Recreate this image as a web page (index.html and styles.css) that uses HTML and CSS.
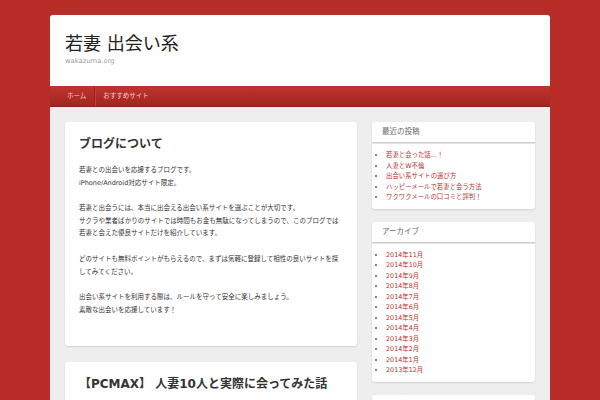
FILE: index.html
```html
<!DOCTYPE html>
<html lang="ja">
<head>
<meta charset="utf-8">
<title>若妻 出会い系</title>
<link rel="stylesheet" href="styles.css">
</head>
<body>
<div class="site">
  <header class="header">
    <h1 class="site-title">若妻 出会い系</h1>
    <div class="site-desc">wakazuma.org</div>
  </header>
  <nav class="nav">
    <a href="#">ホーム</a>
    <a href="#">おすすめサイト</a>
  </nav>
  <div class="content">
    <main class="main">
      <article class="card">
        <h2>ブログについて</h2>
        <p>若妻との出会いを応援するブログです。<br>iPhone/Android対応サイト限定。</p>
        <p>若妻と出会うには、本当に出会える出会い系サイトを選ぶことが大切です。<br>サクラや業者ばかりのサイトでは時間もお金も無駄になってしまうので、このブログでは若妻と会えた優良サイトだけを紹介しています。</p>
        <p>どのサイトも無料ポイントがもらえるので、まずは気軽に登録して相性の良いサイトを探してみてください。</p>
        <p>出会い系サイトを利用する際は、ルールを守って安全に楽しみましょう。<br>素敵な出会いを応援しています！</p>
      </article>
      <article class="card">
        <h2>【PCMAX】 人妻10人と実際に会ってみた話</h2>
        <p>PCMAXで実際に人妻と会ってみた体験談をまとめました。</p>
      </article>
    </main>
    <aside class="sidebar">
      <section class="widget">
        <h3>最近の投稿</h3>
        <ul>
          <li><a href="#">若妻と会った話…！</a></li>
          <li><a href="#">人妻とW不倫</a></li>
          <li><a href="#">出会い系サイトの選び方</a></li>
          <li><a href="#">ハッピーメールで若妻と会う方法</a></li>
          <li><a href="#">ワクワクメールの口コミと評判！</a></li>
        </ul>
      </section>
      <section class="widget">
        <h3>アーカイブ</h3>
        <ul>
          <li><a href="#">2014年11月</a></li>
          <li><a href="#">2014年10月</a></li>
          <li><a href="#">2014年9月</a></li>
          <li><a href="#">2014年8月</a></li>
          <li><a href="#">2014年7月</a></li>
          <li><a href="#">2014年6月</a></li>
          <li><a href="#">2014年5月</a></li>
          <li><a href="#">2014年4月</a></li>
          <li><a href="#">2014年3月</a></li>
          <li><a href="#">2014年2月</a></li>
          <li><a href="#">2014年1月</a></li>
          <li><a href="#">2013年12月</a></li>
        </ul>
      </section>
      <section class="widget">
        <h3>カテゴリー</h3>
        <ul>
          <li><a href="#">体験談</a></li>
        </ul>
      </section>
    </aside>
  </div>
</div>
</body>
</html>
```
FILE: styles.css
```css
* { box-sizing: border-box; }
html, body { margin: 0; padding: 0; }
body {
  background: #b92d29;
  font-family: "DejaVu Sans", "Noto Sans CJK JP", sans-serif;
  color: #333;
}
.site { width: 500px; margin: 15px auto 0; }
.header {
  background: #fff;
  height: 71px;
  padding: 19px 15px 0;
  border-radius: 3px 3px 0 0;
}
.site-title {
  margin: 0;
  font-size: 18px;
  line-height: 20px;
  font-weight: normal;
  color: #222;
}
.site-desc {
  margin-top: 2.5px;
  font-size: 6.8px;
  line-height: 9px;
  color: #999;
}
.nav {
  display: flex;
  height: 21px;
  padding-left: 9px;
  background: linear-gradient(#c2332f, #a02622);
  border-bottom: 1px solid #8d201d;
}
.nav a {
  padding: 0 8px;
  font-size: 6.5px;
  line-height: 20px;
  color: #f3cccc;
  text-decoration: none;
}
.nav a + a {
  border-left: 1px solid #96231f;
  box-shadow: inset 1px 0 0 #c5403b;
}
.content {
  display: flex;
  align-items: flex-start;
  gap: 15px;
  padding: 15px;
  background: #eeeeee;
}
.main { width: 292px; flex: none; }
.card {
  margin-bottom: 16px;
  padding: 14px 14px 17px;
  background: #fff;
  border-radius: 3px;
  box-shadow: 0 1px 2px rgba(0, 0, 0, 0.13);
}
.card h2 {
  margin: 0 0 12px;
  font-size: 12px;
  line-height: 16px;
  font-weight: bold;
  color: #333;
  white-space: nowrap;
}
.card p {
  margin: 0 0 13px;
  font-size: 6.5px;
  line-height: 12.6px;
  color: #333;
}
.sidebar { width: 163px; flex: none; }
.widget {
  margin-bottom: 13px;
  background: #fff;
  border-radius: 3px;
  box-shadow: 0 1px 2px rgba(0, 0, 0, 0.13);
}
.widget h3 {
  margin: 0;
  padding: 0 10px;
  font-size: 7.5px;
  line-height: 20px;
  font-weight: normal;
  color: #666;
  border-bottom: 1px solid #cfcfcf;
  box-shadow: 0 1px 0 #e4e4e4;
}
.widget ul {
  margin: 0;
  padding: 7px 0 6px 14px;
}
.widget li {
  font-size: 6.4px;
  line-height: 10.5px;
  color: #555;
}
.widget a {
  color: #b8312d;
  text-decoration: none;
}
```
